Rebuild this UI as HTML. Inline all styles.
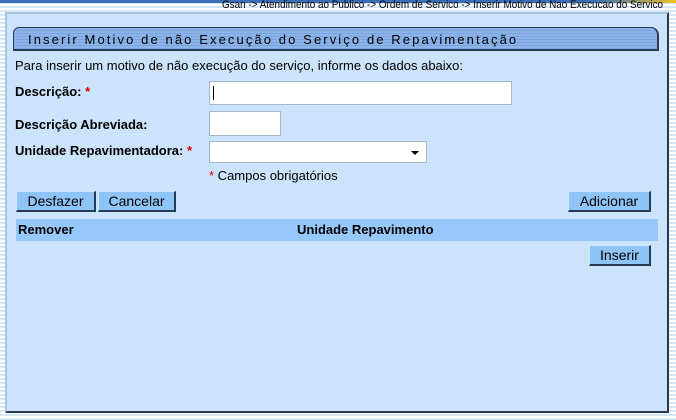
<!DOCTYPE html>
<html><head><meta charset="utf-8"><style>
body{margin:0;width:676px;height:420px;overflow:hidden;position:relative;font-family:"Liberation Sans",Arial,sans-serif;
background:repeating-linear-gradient(to bottom,#fff 0,#fff 2px,#d6e6f6 2px,#d6e6f6 4px);}
.top{position:absolute;left:0;top:0;width:676px;height:3px;background:linear-gradient(90deg,#3a6fb8 0,#3a6fb8 88%,#f0c020 100%)}
.crumb{position:absolute;right:13px;top:0px;height:11px;font-size:11px;line-height:11px;color:#000;padding-left:3px;transform:scaleX(.9);transform-origin:right}
.panel{position:absolute;left:5px;top:12px;width:660px;height:397px;background:#cbe3fb;border-left:2px solid #a9c4de;border-top:2px solid #a9c4de;border-right:2px solid #2a3a52;border-bottom:2px solid #2a3a52}
.title{position:absolute;left:6px;top:13px;width:646px;height:24px;border:1px solid #2a3a52;border-right-width:2px;border-bottom-width:2px;border-radius:6px 8px 0 0;
background:repeating-linear-gradient(to bottom,#8db4e8 0,#8db4e8 2px,#7aa5e0 2px,#7aa5e0 3px);font-size:13px;letter-spacing:2.1px;line-height:24px;padding-left:14px;box-sizing:border-box;color:#000}
.t{position:absolute;font-size:13px;color:#000}
.b{font-weight:bold}
.r{color:#d00}
.in{position:absolute;background:#fff;border:1px solid #a9b8c8;box-sizing:border-box}
.btn{position:absolute;height:21px;background:#8fc4f6;border:1px solid #cfe6ff;border-right:2px solid #2a3a52;border-bottom:2px solid #2a3a52;box-sizing:border-box;font-size:14px;line-height:18px;text-align:center;color:#000}
.hdr{position:absolute;left:9px;top:205px;width:642px;height:22px;background:#96c8fa}
</style></head><body>
<div class="top"></div>
<div class="crumb">Gsan -&gt; Atendimento ao Publico -&gt; Ordem de Servico -&gt; Inserir Motivo de Nao Execucao do Servico</div>
<div class="panel">
<div class="title">Inserir Motivo de não Execução do Serviço de Repavimentação</div>
<div class="t" style="left:8px;top:44px">Para inserir um motivo de não execução do serviço, informe os dados abaixo:</div>
<div class="t b" style="left:8px;top:70px">Descrição: <span class="r">*</span></div>
<div class="in" style="left:202px;top:67px;width:303px;height:24px"><div style="position:absolute;left:3px;top:4px;width:1px;height:14px;background:#000"></div></div>
<div class="t b" style="left:8px;top:103px">Descrição Abreviada:</div>
<div class="in" style="left:202px;top:97px;width:72px;height:25px"></div>
<div class="t b" style="left:8px;top:129px">Unidade Repavimentadora: <span class="r">*</span></div>
<div class="in" style="left:202px;top:127px;width:218px;height:22px"><div style="position:absolute;right:7px;top:9px;border-left:4px solid transparent;border-right:4px solid transparent;border-top:4px solid #000"></div></div>
<div class="t" style="left:202px;top:154px"><span class="r">*</span> Campos obrigatórios</div>
<div class="btn" style="left:9px;top:177px;width:80px">Desfazer</div>
<div class="btn" style="left:91px;top:177px;width:78px">Cancelar</div>
<div class="btn" style="left:561px;top:177px;width:83px">Adicionar</div>
<div class="hdr"></div>
<div class="t b" style="left:11px;top:208px;font-size:13px">Remover</div>
<div class="t b" style="left:290px;top:208px;font-size:13px">Unidade Repavimento</div>
<div class="btn" style="left:582px;top:231px;width:62px">Inserir</div>
</div>
</body></html>
